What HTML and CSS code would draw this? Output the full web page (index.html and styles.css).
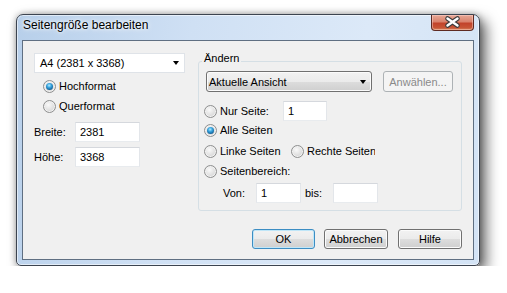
FILE: index.html
```html
<!DOCTYPE html>
<html lang="de">
<head>
  <meta charset="UTF-8">
  <title>Seitengröße bearbeiten</title>
  <link rel="stylesheet" href="styles.css">
</head>
<body>
  <div class="window">
    <div class="titlebar">
      <span class="title">Seitengröße bearbeiten</span>
      <div class="close">
        <svg width="41" height="14" viewBox="0 0 41 14">
          <path d="M15.5 3.5 L25.5 10.5 M25.5 3.5 L15.5 10.5" stroke="#3b3b3b" stroke-width="4.6" stroke-linecap="round"/>
          <path d="M15.5 3.5 L25.5 10.5 M25.5 3.5 L15.5 10.5" stroke="#ffffff" stroke-width="2.4" stroke-linecap="round"/>
        </svg>
      </div>
    </div>

    <div class="client">
      <div class="main">
        <div class="left">
          <div class="combo flat">
            <span>A4 (2381 x 3368)</span>
            <span class="arrow"></span>
          </div>
          <div class="radio-row first indent"><span class="radio checked"></span>Hochformat</div>
          <div class="radio-row indent"><span class="radio"></span>Querformat</div>
          <div class="field-row first-field">
            <span class="field-label">Breite:</span>
            <span class="input wide">2381</span>
          </div>
          <div class="field-row">
            <span class="field-label">Höhe:</span>
            <span class="input wide">3368</span>
          </div>
        </div>

        <fieldset class="group">
          <legend>Ändern</legend>
          <div class="combo-row">
            <div class="combo raised">
              <span>Aktuelle Ansicht</span>
              <span class="arrow"></span>
            </div>
            <div class="btn disabled">Anwählen...</div>
          </div>

          <div class="radio-row nur">
            <span class="radio-label"><span class="radio"></span>Nur Seite:</span>
            <span class="input small">1</span>
          </div>
          <div class="radio-row alle"><span class="radio checked"></span>Alle Seiten</div>
          <div class="radio-row linke">
            <span class="radio-label side"><span class="radio"></span>Linke Seiten</span>
            <span class="radio"></span><span class="clip">Rechte Seiten</span>
          </div>
          <div class="radio-row bereich"><span class="radio"></span>Seitenbereich:</div>
          <div class="range-row">
            <span class="von">Von:</span>
            <span class="input range">1</span>
            <span class="bis">bis:</span>
            <span class="input range"></span>
          </div>
        </fieldset>
      </div>

      <div class="buttons">
        <div class="btn default ok">OK</div>
        <div class="btn abbr">Abbrechen</div>
        <div class="btn hilfe">Hilfe</div>
      </div>
    </div>
  </div>
</body>
</html>
```

FILE: styles.css
```css
body {
  margin: 0;
  background: #ffffff;
  font-family: 'Liberation Sans', Arial, sans-serif;
  font-size: 11px;
  color: #000;
}

.window {
  box-sizing: border-box;
  width: 464px;
  height: 252px;
  margin: 14px 0 0 16px;
  border: 1px solid #3c4450;
  border-radius: 7px 7px 5px 5px;
  background: linear-gradient(100deg, #b7cfea 0%, #cfe0f4 35%, #dce9f8 70%, #d3e3f5 100%);
  box-shadow: inset 0 0 0 1px rgba(255,255,255,0.55), 6px 6px 14px rgba(0,0,0,0.6), 0 0 6px rgba(0,0,0,0.3);
}

.titlebar {
  display: flex;
  justify-content: space-between;
  align-items: flex-start;
  height: 25px;
}

.title {
  padding: 3px 0 0 6px;
  font-size: 12px;
  line-height: 14px;
  text-shadow: 0 0 6px #fff, 0 0 3px #fff;
}

.close {
  box-sizing: border-box;
  width: 43px;
  height: 16px;
  margin-right: 5px;
  border: 1px solid #5e2a22;
  border-top: none;
  border-radius: 0 0 4px 4px;
  background: linear-gradient(#e8a897 0%, #d9826c 45%, #c2432a 55%, #c75536 85%, #d98a62 100%);
  box-shadow: inset 0 0 0 1px rgba(255,220,210,0.45);
  display: flex;
  justify-content: center;
}

.client {
  box-sizing: border-box;
  height: 220px;
  margin: 0 5px;
  padding: 12px 11px 0 11px;
  border: 1px solid #5f6f82;
  background: #f0f0f0;
}

.main {
  display: flex;
  align-items: flex-start;
}

.left {
  width: 152px;
}

.combo {
  box-sizing: border-box;
  display: flex;
  justify-content: space-between;
  align-items: center;
  height: 20px;
  white-space: nowrap;
}

.combo.flat {
  padding: 0 5px;
  background: #fff;
  border: 1px solid #dfe3e8;
}

.combo.raised {
  width: 166px;
  height: 21px;
  padding: 0 5px 0 2px;
  border: 1px solid #707070;
  border-radius: 3px;
  background: linear-gradient(#f2f2f2 0%, #ebebeb 50%, #dddddd 51%, #cfcfcf 100%);
  box-shadow: inset 0 0 0 1px #fbfbfb;
}

.arrow {
  width: 0;
  height: 0;
  border-left: 3.5px solid transparent;
  border-right: 3.5px solid transparent;
  border-top: 4px solid #000;
}

.radio-row {
  display: flex;
  align-items: center;
  height: 20px;
  gap: 3px;
  white-space: nowrap;
}

.radio-row.first {
  margin-top: 3px;
}

.radio-row.indent {
  padding-left: 9px;
}

.radio {
  box-sizing: border-box;
  flex-shrink: 0;
  width: 13px;
  height: 13px;
  border: 1px solid #8e8f8f;
  border-radius: 50%;
  background: radial-gradient(circle at 40% 35%, #fafafa 0%, #e4e4e4 45%, #c8c8c8 100%);
  box-shadow: inset 0 0 0 1px #f2f2f2;
  display: flex;
  align-items: center;
  justify-content: center;
}

.radio.checked::after {
  content: "";
  width: 7px;
  height: 7px;
  border-radius: 50%;
  background: radial-gradient(circle at 45% 35%, #b5ecff 0%, #3aa6e0 35%, #0f5f97 75%, #1c3a55 100%);
}

.radio-label {
  display: flex;
  align-items: center;
  gap: 3px;
}

.field-row {
  display: flex;
  align-items: center;
  margin-top: 5px;
}

.field-row.first-field {
  margin-top: 6px;
}

.field-label {
  width: 41px;
}

.input {
  box-sizing: border-box;
  height: 20px;
  padding-left: 4px;
  line-height: 18px;
  background: #fff;
  border: 1px solid;
  border-color: #d5d8dd #e3e6ea #e8ebee #e3e6ea;
}

.input.wide {
  width: 65px;
}

.group {
  width: 264px;
  box-sizing: border-box;
  margin: -1px 0 0 13px;
  padding: 1px 8px 7px 5px;
  border: 1px solid #d5dfe5;
  border-radius: 3px;
}

.group legend {
  margin-left: -2px;
  padding: 0 2px 5px;
  line-height: 13px;
}

.combo-row {
  display: flex;
  gap: 11px;
  margin-left: 2px;
}

.btn {
  box-sizing: border-box;
  height: 20px;
  display: flex;
  align-items: center;
  justify-content: center;
  border: 1px solid #707070;
  border-radius: 3px;
  background: linear-gradient(#f2f2f2 0%, #ebebeb 50%, #dddddd 51%, #cfcfcf 100%);
  box-shadow: inset 0 0 0 1px #fbfbfb;
}

.btn.disabled {
  width: 70px;
  height: 21px;
  color: #8a8a8a;
  border-color: #adb2b5;
  background: #f4f4f4;
  box-shadow: none;
}

.radio-row.nur {
  margin-top: 9px;
}

.nur .radio-label {
  width: 76px;
}

.input.small {
  width: 44px;
}

.radio-row.alle {
  height: 18px;
}

.radio-row.linke {
  height: 18px;
  margin-top: 3px;
}

.radio-label.side {
  width: 84px;
}

.clip {
  width: 68px;
  overflow: hidden;
}

.radio-row.bereich {
  height: 18px;
  margin-top: 2px;
}

.range-row {
  display: flex;
  align-items: center;
  margin-top: 3px;
  padding-left: 19px;
}

.von {
  width: 33px;
}

.input.range {
  width: 45px;
}

.bis {
  box-sizing: border-box;
  width: 32px;
  padding-left: 4px;
}

.buttons {
  display: flex;
  justify-content: flex-end;
  margin-top: 18px;
}

.btn.ok {
  width: 63px;
}

.btn.default {
  border-color: #3c8dc3;
  box-shadow: inset 0 0 0 1px #bfe6f8;
}

.btn.abbr {
  width: 64px;
  margin-left: 9px;
}

.btn.hilfe {
  width: 64px;
  margin-left: 10px;
}
```
